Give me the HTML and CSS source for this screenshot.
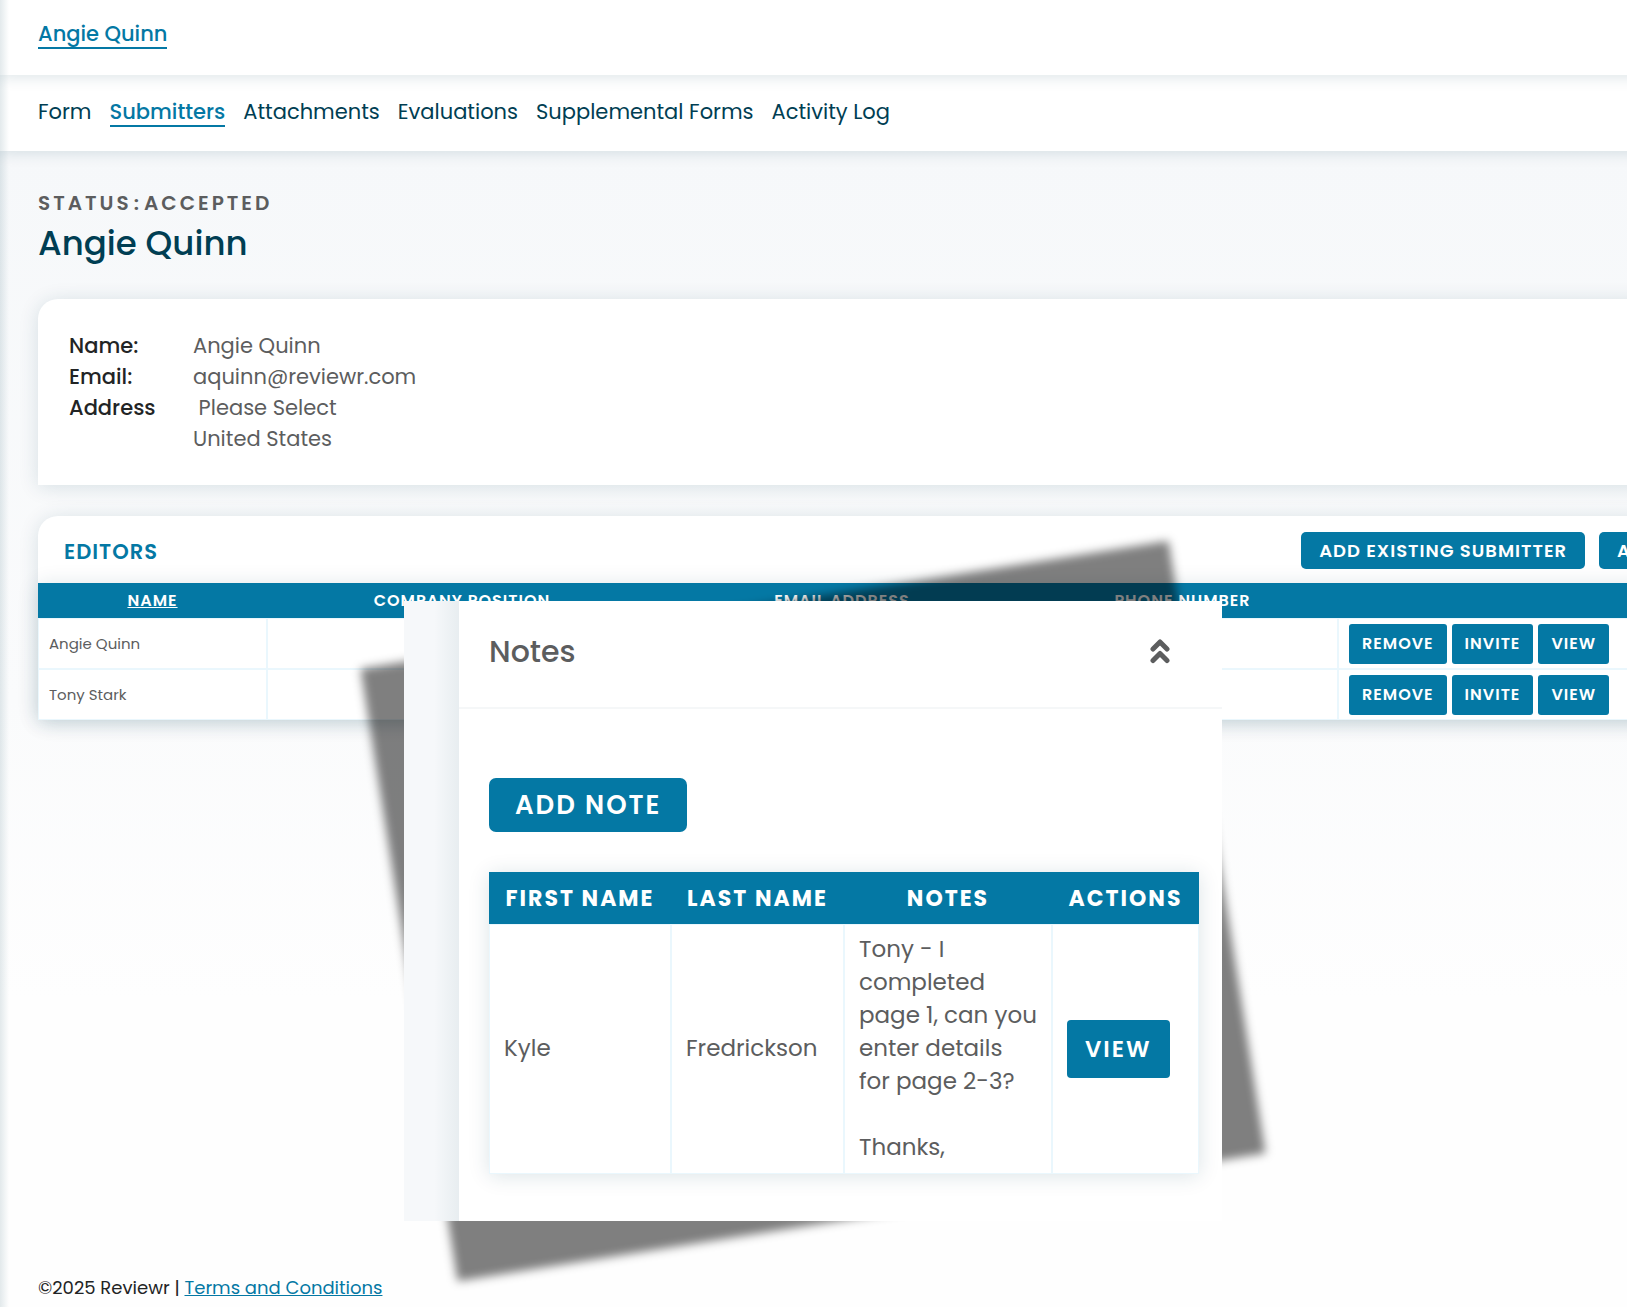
FILE: index.html
```html
<!DOCTYPE html>
<html lang="en">
<head>
<meta charset="utf-8">
<meta name="viewport" content="width=device-width, initial-scale=1">
<title>Angie Quinn - Submitters</title>
<link rel="stylesheet" href="styles.css">
</head>
<body>
<div class="page">
  <header class="topbar"><a class="crumb" href="#">Angie Quinn</a></header>
  <nav class="tabs">
    <a href="#">Form</a>
    <a class="active" href="#">Submitters</a>
    <a href="#">Attachments</a>
    <a href="#">Evaluations</a>
    <a href="#">Supplemental Forms</a>
    <a href="#">Activity Log</a>
  </nav>
  <main class="content">
    <p class="status">STATUS<span>:</span>ACCEPTED</p>
    <h1>Angie Quinn</h1>
    <section class="card details">
      <dl>
        <dt>Name:</dt><dd>Angie Quinn</dd>
        <dt>Email:</dt><dd>aquinn@reviewr.com</dd>
        <dt>Address</dt><dd>&nbsp;Please Select<br>United States</dd>
      </dl>
    </section>
    <section class="card editors">
      <div class="toolbar">
        <h2>EDITORS</h2>
        <button class="btn" type="button">ADD EXISTING SUBMITTER</button>
        <button class="btn" type="button">ADD NEW SUBMITTER</button>
      </div>
      <table class="people">
        <colgroup><col class="c-name"><col class="c-company"><col class="c-email"><col class="c-phone"><col></colgroup>
        <thead>
          <tr><th><a href="#">NAME</a></th><th>COMPANY POSITION</th><th>EMAIL ADDRESS</th><th>PHONE NUMBER</th><th></th></tr>
        </thead>
        <tbody>
          <tr><td>Angie Quinn</td><td></td><td></td><td></td><td><div class="actions"><button class="btn small" type="button">REMOVE</button><button class="btn small" type="button">INVITE</button><button class="btn small" type="button">VIEW</button></div></td></tr>
          <tr><td>Tony Stark</td><td></td><td></td><td></td><td><div class="actions"><button class="btn small" type="button">REMOVE</button><button class="btn small" type="button">INVITE</button><button class="btn small" type="button">VIEW</button></div></td></tr>
        </tbody>
      </table>
    </section>
  </main>
  <footer>©2025 Reviewr | <a href="#">Terms and Conditions</a></footer>

  <aside class="popup">
    <div class="panel">
      <div class="panel-head">
        <h2>Notes</h2>
        <button class="collapse" type="button" aria-label="Collapse notes">
          <svg width="20" height="26" viewBox="0 0 20 26" fill="none" stroke="#5c5d5e" stroke-width="5" stroke-linecap="round" stroke-linejoin="round"><path d="M3 10 10 3l7 7M3 21.500l7-7 7 7"/></svg>
        </button>
      </div>
      <div class="panel-body">
        <button class="btn large" type="button">ADD NOTE</button>
        <table class="notes">
          <colgroup><col class="n-first"><col class="n-last"><col class="n-note"><col></colgroup>
          <thead><tr><th>FIRST NAME</th><th>LAST NAME</th><th>NOTES</th><th>ACTIONS</th></tr></thead>
          <tbody><tr><td>Kyle</td><td>Fredrickson</td><td>Tony - I<br>completed<br>page 1, can you<br>enter details<br>for page 2-3?<br><br>Thanks,</td><td><button class="btn view" type="button">VIEW</button></td></tr></tbody>
        </table>
      </div>
    </div>
  </aside>
</div>
</body>
</html>
```
FILE: styles.css
```css
* { box-sizing: border-box; }

:root {
  --blue: #0478a4;
  --navy: #003e53;
  --gray: #5c5d5e;
  --line: #eaf7fd;
  --shadow: 0 2px 20px rgba(0, 62, 83, 0.14);
}

body {
  margin: 0;
  font-family: Poppins, Inter, "Liberation Sans", sans-serif;
  color: var(--gray);
}

h1, h2, p, dl, dd { margin: 0; }
a { color: var(--blue); }
button { font-family: inherit; cursor: pointer; }

.page {
  position: relative;
  display: flex;
  flex-direction: column;
  min-height: 100vh;
  overflow: hidden;
  background: linear-gradient(#f6f8fa 150px, #fafbfc 700px, #fefefe 1000px);
}

.page::before {
  content: "";
  position: absolute;
  z-index: 3;
  inset: 0 auto 0 0;
  width: 9px;
  background: linear-gradient(90deg, rgba(0, 62, 83, 0.11), transparent);
}

/* the bars run past the window so their shadows stay even at the right edge */
.topbar, .tabs {
  display: flex;
  position: relative;
  margin-right: -20px;
  padding: 0 38px;
  background: #fff;
  box-shadow: 0 2px 14px rgba(0, 62, 83, 0.14);
  font-size: 21px;
  line-height: 26px;
}
.topbar { z-index: 2; height: 75px; padding-top: 21px; align-items: flex-start; }
.tabs { z-index: 1; height: 76px; padding-top: 24px; gap: 18px; align-items: flex-start; }
.tabs a { color: var(--navy); text-decoration: none; white-space: nowrap; }
.crumb { font-weight: 500; text-decoration: none; border-bottom: 2px solid; }
.tabs .active { color: var(--blue); font-weight: 500; border-bottom: 2px solid; }

.content { flex: 1; padding: 37px 0 0 38px; }
.status { font-size: 20px; line-height: 30px; font-weight: 600; letter-spacing: 3px; }
.status span { margin: 0 2px; }
h1 { font-size: 34px; line-height: 50px; font-weight: 500; color: var(--navy); }

/* cards run on past the right edge of the window */
.card {
  width: calc(100% + 240px);
  background: #fff;
  border-radius: 20px 20px 0 0;
  box-shadow: var(--shadow);
}
.details { margin-top: 31px; padding: 31px; }
.details dl {
  display: grid;
  grid-template-columns: 124px 1fr;
  font-size: 21px;
  line-height: 31px;
}
.details dt { color: #222425; font-weight: 500; }

.editors { margin-top: 31px; }
.toolbar { display: flex; align-items: center; gap: 14px; height: 67px; padding: 2px 16px 0 26px; }
.toolbar h2 { flex: 1; padding-top: 2px; color: var(--blue); font-size: 21px; font-weight: 600; letter-spacing: 1px; }

.btn {
  flex: none;
  border: 0;
  border-radius: 5px;
  background: var(--blue);
  color: #fff;
  font-weight: 600;
  letter-spacing: 1px;
  white-space: nowrap;
  height: 37px;
  padding: 0 18px;
  font-size: 18px;
}
.toolbar .btn { min-width: 252px; text-align: left; }
.btn.small { height: 40px; padding: 0 13px; border-radius: 3px; font-size: 16px; }
.actions { display: flex; gap: 5px; }

table { border-collapse: separate; border-spacing: 0; table-layout: fixed; width: 100%; background: #fff; box-shadow: var(--shadow); }
th { background: var(--blue); color: #fff; letter-spacing: 1px; padding: 0; white-space: nowrap; }
th a { color: inherit; }
td { border: 1px solid var(--line); text-align: left; white-space: nowrap; }

.people th { height: 35px; font-size: 16px; font-weight: 600; }
.people td { height: 51px; padding: 0 10px; font-size: 15px; }
.c-name { width: 229px; }
.c-company { width: 390px; }
.c-email { width: 370px; }
.c-phone { width: 311px; }

footer { padding: 0 38px 6px; font-size: 18px; line-height: 27px; color: #222425; }

/* floating notes window over the page, with its tilted shadow */
.popup { position: absolute; z-index: 4; left: 404px; top: 601px; width: 818px; }
.popup::before {
  content: "";
  position: absolute;
  inset: 0;
  background: rgba(0, 0, 0, 0.5);
  filter: blur(5px);
  transform: rotate(-9deg);
}
.panel {
  position: relative;
  border-left: 55px solid #f6f8fa;
  background: #fff;
}
.panel::before {
  content: "";
  position: absolute;
  inset: 0 auto 0 -25px;
  width: 25px;
  background: linear-gradient(90deg, transparent, rgba(0, 62, 83, 0.06));
}
.panel-head {
  display: flex;
  align-items: center;
  justify-content: space-between;
  height: 108px;
  padding: 0 52px 4px 30px;
  border-bottom: 2px solid #f5f7f8;
}
.panel-head h2 { font-size: 30px; font-weight: 500; }
.collapse { display: flex; padding: 0; border: 0; background: none; }
.panel-body { padding: 69px 23px 47px 30px; }
.btn.large { display: block; height: 54px; padding: 0 26px; border-radius: 7px; font-size: 26px; letter-spacing: 2px; margin-bottom: 40px; }
.notes th { height: 52px; font-size: 22px; font-weight: 700; letter-spacing: 2px; }
.notes td { padding: 8px 14px 9px; font-size: 23px; line-height: 33px; }
.n-first { width: 182px; }
.n-last { width: 173px; }
.n-note { width: 208px; }
.btn.view { height: 58px; padding: 0 18px; border-radius: 4px; font-size: 23px; letter-spacing: 2px; }
```
